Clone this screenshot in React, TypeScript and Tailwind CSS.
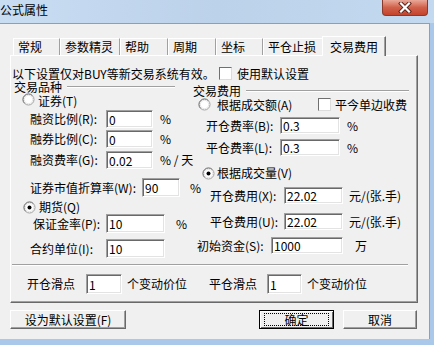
import React from 'react'

function Radio({ checked }: { checked?: boolean }) {
  return (
    <svg width="13" height="13" viewBox="0 0 13 13" className="shrink-0">
      <circle cx="6.5" cy="6.5" r="5.5" fill="#fff" stroke="#a0a0a0" />
      <path d="M2.6 10.4 A5.5 5.5 0 0 1 10.4 2.6" fill="none" stroke="#808080" />
      <circle cx="6.5" cy="6.5" r="4.2" fill="none" stroke="#e6e6e6" />
      {checked && <circle cx="6.5" cy="6.5" r="2" fill="#000" />}
    </svg>
  )
}

function Check() {
  return (
    <span className="block h-[13px] w-[13px] shrink-0 border border-t-[#707070] border-l-[#707070] border-r-[#dcdcdc] border-b-[#dcdcdc] bg-white" />
  )
}

function Field({ value, w, h = 18 }: { value: string; w: string; h?: number }) {
  return (
    <input
      readOnly
      defaultValue={value}
      style={{ height: h }}
      className={`${w} shrink-0 border border-t-[#a0a0a0] border-l-[#a0a0a0] border-r-white border-b-white bg-white pl-[2px] text-[12px] shadow-[inset_1px_1px_0_#696969,inset_-1px_-1px_0_#e3e3e3] outline-none`}
    />
  )
}

function GroupTitle({ title, line }: { title: string; line: string }) {
  return (
    <div className="flex h-[12px] items-center">
      <span className="leading-[12px]">{title}</span>
      <span className={`${line} ml-[5px] border-t border-b border-t-[#a0a0a0] border-b-white`} />
    </div>
  )
}

const tabs = [
  { t: '常规', w: 'w-[47px]' },
  { t: '参数精灵', w: 'w-[60px]' },
  { t: '帮助', w: 'w-[48px]' },
  { t: '周期', w: 'w-[48px]' },
  { t: '坐标', w: 'w-[47px]' },
  { t: '平仓止损', w: 'w-[61px]' },
]

export default function App() {
  return (
    <div className="relative h-[345px] w-[434px] overflow-hidden whitespace-nowrap bg-[#aac8ea] font-['Noto_Sans_CJK_SC','Noto_Sans',sans-serif] text-[12px] leading-[14px] text-black">
      {/* title bar */}
      <div className="flex h-[23px] items-center bg-gradient-to-r from-[#c9ddf2] via-[#bcd2ea] to-[#c3d9f0] pb-[4px]">
        <span className="text-[12px]">公式属性</span>
      </div>
      <div className="absolute right-[6px] top-0 flex h-[16px] w-[46px] items-center justify-center rounded-b-[4px] border border-t-0 border-[#8a3a2c] bg-gradient-to-b from-[#e9a899] via-[#d0604a] to-[#c5422c]">
        <svg width="14" height="11" viewBox="0 0 14 11">
          <path d="M3 1.5 L11 9.5 M11 1.5 L3 9.5" stroke="#5a2018" strokeWidth="4" strokeLinecap="square" />
          <path d="M3 1.5 L11 9.5 M11 1.5 L3 9.5" stroke="#fff" strokeWidth="2.2" strokeLinecap="square" />
        </svg>
      </div>

      {/* client area */}
      <div className="h-[316px] w-[430px] border-t border-r border-[#8f9fb3] bg-[#f0f0f0] pl-[10px] pt-[12px]">
        {/* tabs */}
        <div className="flex h-[19px] items-end pl-[3px]">
          {tabs.map((x) => (
            <div
              key={x.t}
              className={`${x.w} h-[17px] border-l border-t border-r border-l-white border-t-white border-r-[#a0a0a0] pl-[4px] leading-[16px]`}
            >
              {x.t}
            </div>
          ))}
          <div className="relative z-10 -mb-px -ml-[2px] h-[20px] w-[64px] border-l border-t border-r border-l-white border-t-white border-r-[#696969] bg-[#f0f0f0] pl-[7px] leading-[19px] shadow-[inset_-1px_0_0_#a0a0a0]">
            交易费用
          </div>
        </div>

        {/* panel */}
        <div className="flex h-[248px] w-[408px] flex-col border border-t-white border-l-white border-r-[#696969] border-b-[#696969] shadow-[inset_-1px_-1px_0_#a0a0a0]">
          <div className="mt-[11px] flex h-[13px] items-center pl-[1px] leading-[12px]">
            <span className="w-[207px] shrink-0">以下设置仅对BUY等新交易系统有效。</span>
            <Check />
            <span className="ml-[5px]">使用默认设置</span>
          </div>

          <div className="mt-[1px] flex h-[177px]">
            {/* left column */}
            <div className="flex w-[182px] shrink-0 flex-col">
              <div className="pl-[3px]">
                <GroupTitle title="交易品种" line="w-[108px]" />
              </div>
              <div className="mt-[1px] flex h-[13px] items-center gap-[3px] pl-[11px] leading-[12px]">
                <span className="-mt-[3px]">
                  <Radio />
                </span>
                <span>证券(T)</span>
              </div>
              <div className="mt-[3px] flex h-[18px] items-center pl-[19px]">
                <span className="w-[76px] shrink-0">融资比例(R):</span>
                <Field value="0" w="w-[47px]" />
                <span className="ml-[7px]">%</span>
              </div>
              <div className="mt-[2px] flex h-[18px] items-center pl-[19px]">
                <span className="w-[76px] shrink-0">融券比例(C):</span>
                <Field value="0" w="w-[47px]" />
                <span className="ml-[7px]">%</span>
              </div>
              <div className="mt-[3px] flex h-[18px] items-center pl-[19px]">
                <span className="w-[76px] shrink-0">融资费率(G):</span>
                <Field value="0.02" w="w-[47px]" />
                <span className="ml-[7px]">% / 天</span>
              </div>
              <div className="mt-[9px] flex h-[19px] items-center pl-[19px]">
                <span className="w-[112px] shrink-0">证券市值折算率(W):</span>
                <Field value="90" w="w-[38px]" h={19} />
                <span className="ml-[10px]">%</span>
              </div>
              <div className="mt-[4px] flex h-[12px] items-center gap-[3px] pl-[12px] leading-[12px]">
                <Radio checked />
                <span>期货(Q)</span>
              </div>
              <div className="mt-[1px] flex h-[19px] items-center pl-[22px]">
                <span className="w-[73px] shrink-0">保证金率(P):</span>
                <Field value="10" w="w-[59px]" h={19} />
                <span className="ml-[11px]">%</span>
              </div>
              <div className="mt-[6px] flex h-[19px] items-center pl-[19px]">
                <span className="w-[76px] shrink-0">合约单位(I):</span>
                <Field value="10" w="w-[59px]" h={19} />
              </div>
            </div>

            {/* right column */}
            <div className="flex flex-1 flex-col">
              <div className="mt-[4px]">
                <GroupTitle title="交易费用" line="w-[163px]" />
              </div>
              <div className="mt-[1px] flex h-[13px] items-center pl-[5px] leading-[12px]">
                <div className="flex w-[120px] shrink-0 items-center gap-[6px]">
                  <Radio />
                  <span>根据成交额(A)</span>
                </div>
                <Check />
                <span className="ml-[4px]">平今单边收费</span>
              </div>
              <div className="mt-[6px] flex h-[17px] items-center pl-[13px]">
                <span className="w-[74px] shrink-0">开仓费率(B):</span>
                <Field value="0.3" w="w-[60px]" h={17} />
                <span className="ml-[7px]">%</span>
              </div>
              <div className="mt-[5px] flex h-[17px] items-center pl-[13px]">
                <span className="w-[74px] shrink-0">平仓费率(L):</span>
                <Field value="0.3" w="w-[60px]" h={17} />
                <span className="ml-[7px]">%</span>
              </div>
              <div className="mt-[10px] flex h-[14px] items-center gap-[2px] pl-[9px]">
                <Radio checked />
                <span>根据成交量(V)</span>
              </div>
              <div className="mt-[7px] flex h-[17px] items-center pl-[17px]">
                <span className="w-[74px] shrink-0">开仓费用(X):</span>
                <Field value="22.02" w="w-[59px]" h={17} />
                <span className="ml-[6px]">元/(张.手)</span>
              </div>
              <div className="mt-[9px] flex h-[17px] items-center pl-[17px]">
                <span className="w-[74px] shrink-0">平仓费用(U):</span>
                <Field value="22.02" w="w-[59px]" h={17} />
                <span className="ml-[6px]">元/(张.手)</span>
              </div>
              <div className="mt-[7px] flex h-[17px] items-center pl-[4px]">
                <span className="w-[74px] shrink-0">初始资金(S):</span>
                <Field value="1000" w="w-[72px]" h={17} />
                <span className="ml-[12px]">万</span>
              </div>
            </div>
          </div>

          <div className="ml-[1px] mt-[6px] w-[396px] border-t border-b border-t-[#a0a0a0] border-b-white" />

          <div className="mt-[8px] flex h-[20px] items-center pl-[16px]">
            <span className="w-[59px] shrink-0">开仓滑点</span>
            <Field value="1" w="w-[36px]" h={20} />
            <span className="ml-[5px] w-[82px] shrink-0">个变动价位</span>
            <span className="w-[58px] shrink-0">平仓滑点</span>
            <Field value="1" w="w-[35px]" h={20} />
            <span className="ml-[5px]">个变动价位</span>
          </div>
        </div>

        {/* buttons */}
        <div className="mt-[7px] flex h-[19px]">
          <button className="h-[19px] w-[116px] border border-t-white border-l-white border-r-[#696969] border-b-[#696969] bg-[#f0f0f0] shadow-[inset_-1px_-1px_0_#a0a0a0]">
            设为默认设置(F)
          </button>
          <button className="ml-[133px] flex h-[19px] w-[75px] items-center justify-center border border-black bg-[#f0f0f0] shadow-[inset_1px_1px_0_#fff,inset_-1px_-1px_0_#696969]">
            <span className="flex h-[13px] w-[65px] items-center justify-center border border-dotted border-black">确定</span>
          </button>
          <button className="ml-[9px] h-[19px] w-[74px] border border-t-white border-l-white border-r-[#696969] border-b-[#696969] bg-[#f0f0f0] shadow-[inset_-1px_-1px_0_#a0a0a0]">
            取消
          </button>
        </div>
      </div>
    </div>
  )
}
